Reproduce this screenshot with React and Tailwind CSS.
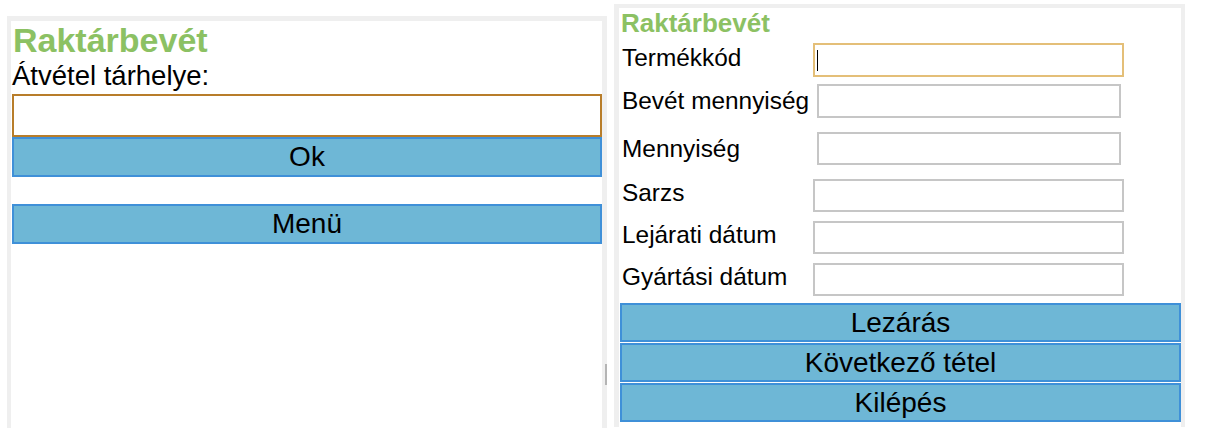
import React from "react";

const font = { fontFamily: '"Liberation Sans", Arial, sans-serif' };

function Btn({ children, className = "" }) {
  return (
    <div
      className={
        "flex items-center justify-center border-2 border-[#3f90d8] bg-[#6eb7d6] text-[28px] leading-none text-black " +
        className
      }
    >
      {children}
    </div>
  );
}

function Row({ label, inputW, labelW, h, focused, lift }) {
  return (
    <div className="flex items-center" style={{ height: h }}>
      <div
        className={
          "flex h-full items-center pl-[3px] text-[24.4px] leading-[28px] text-black " + (lift ? "pb-[5px]" : "")
        }
        style={{ width: labelW }}
      >
        {label}
      </div>
      <div
        className={
          "relative box-border h-full bg-white " +
          (focused ? "border-2 border-[#e4bf78]" : "border-2 border-[#c6c6c6]")
        }
        style={{ width: inputW }}
      >
        {focused && <div className="absolute left-[2px] top-[5px] h-[21px] w-[1px] bg-black" />}
      </div>
    </div>
  );
}

export default function App() {
  return (
    <div className="h-[445px] w-[1210px] bg-white leading-normal" style={font}>
      <div className="flex items-start">
        {/* Left panel */}
        <div className="relative ml-[7px] mt-[16px] h-[412px] w-[600px] bg-[#efefef] pl-[4px] pr-[5px] pt-[5px]">
          <div className="absolute right-0 top-[348px] h-[21px] w-[2px] bg-[#b4b4b4]" />
          <div className="flex h-full flex-col bg-white">
            <div className="pl-[2px] text-[34px] font-bold leading-[39px] text-[#8cc163]">Raktárbevét</div>
            <div className="pl-[1px] text-[27.5px] leading-[32px] text-black">Átvétel tárhelye:</div>
            <div className="ml-[1px] mt-[2px] h-[43px] border-2 border-[#b87d2a] bg-white" />
            <Btn className="ml-[1px] h-[40px]">Ok</Btn>
            <Btn className="ml-[1px] mt-[27px] h-[40px]">Menü</Btn>
          </div>
        </div>
        {/* Right panel */}
        <div className="ml-[7px] mt-[4px] h-[423px] w-[571px] bg-[#efefef] pl-[5px] pr-[4px] pt-[4px]">
          <div className="flex h-full flex-col bg-white">
            <div className="pl-[2px] text-[26px] font-bold leading-[30px] text-[#8cc163]">Raktárbevét</div>
            <div className="mt-[5px]">
              <Row label="Termékkód" labelW={194} inputW={311} h={34} focused lift />
            </div>
            <div className="mt-[7px]">
              <Row label="Bevét mennyiség" labelW={198} inputW={304} h={34} />
            </div>
            <div className="mt-[14px]">
              <Row label="Mennyiség" labelW={198} inputW={304} h={33} />
            </div>
            <div className="mt-[14px]">
              <Row label="Sarzs" labelW={194} inputW={311} h={33} lift />
            </div>
            <div className="mt-[9px]">
              <Row label="Lejárati dátum" labelW={194} inputW={311} h={33} lift />
            </div>
            <div className="mt-[9px]">
              <Row label="Gyártási dátum" labelW={194} inputW={311} h={33} lift />
            </div>
            <div className="ml-[1px] mt-[7px] flex flex-col gap-[1px]">
              <Btn className="h-[39px]">Lezárás</Btn>
              <Btn className="h-[39px]">Következő tétel</Btn>
              <Btn className="h-[39px]">Kilépés</Btn>
            </div>
          </div>
        </div>
      </div>
    </div>
  );
}
